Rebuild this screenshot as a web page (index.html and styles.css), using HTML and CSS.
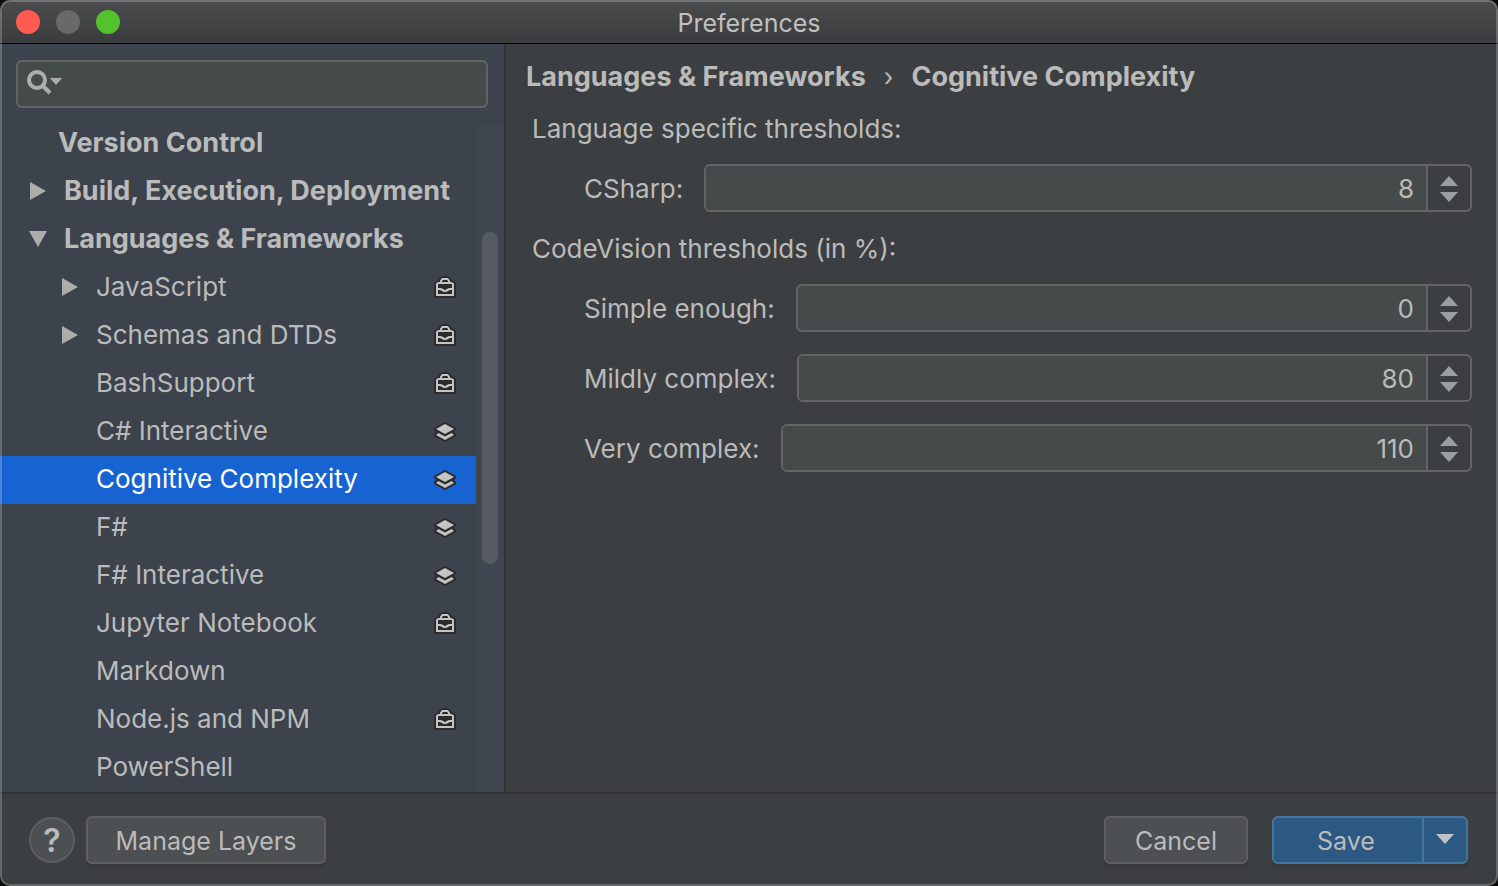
FILE: index.html
```html
<!DOCTYPE html>
<html lang="en">
<head>
<meta charset="utf-8">
<title>Preferences</title>
<link rel="stylesheet" href="styles.css">
</head>
<body>
<svg class="sprite" width="0" height="0" aria-hidden="true">
  <symbol id="bag" viewBox="0 0 22 22">
    <path fill="#2b2b2b" d="M0 22V7L4 4L6 2L8 0H14L16 2L18 4L22 7V22Z"/>
    <path fill="none" stroke="#c4c4c4" stroke-width="2" d="M7 6V5L8.500 3H13.500L15 5V6M3 13V8L4.500 7H17.500L19 8V13"/>
    <path fill="none" stroke="#c4c4c4" stroke-width="2" d="M3 14V19H19V14"/>
    <path fill="#c4c4c4" d="M2 12H7L9 13H10V14H12V13H13L15 12H20V14H16L14 15L12 16H10L8 15L6 14H2Z"/>
  </symbol>
  <symbol id="layers" viewBox="0 0 22 22">
    <path fill="#2b2b2b" d="M11 2L22 8V10L20 12L22 14V16L11 22L0 16V14L2 12L0 10V8Z"/>
    <path fill="#c4c4c4" d="M11 4L20 9L11 14L2 9Z"/>
    <path fill="#c4c4c4" d="M4.500 13L11 16.500L17.500 13L20 15L11 20L2 15Z"/>
  </symbol>
  <symbol id="right" viewBox="0 0 16 18"><path fill="#adadad" d="M0 0L16 9L0 18Z"/></symbol>
  <symbol id="down" viewBox="0 0 18 16"><path fill="#adadad" d="M0 0H18L9 16Z"/></symbol>
  <symbol id="spin-up" viewBox="0 0 18 10"><path fill="#9c9fa1" d="M9 0L18 10H0Z"/></symbol>
  <symbol id="spin-down" viewBox="0 0 18 10"><path fill="#9c9fa1" d="M0 0H18L9 10Z"/></symbol>
</svg>
<div class="window">
  <header class="titlebar">
    <div class="lights">
      <button class="light light-close" aria-label="Close"></button>
      <button class="light light-min" aria-label="Minimize" disabled></button>
      <button class="light light-zoom" aria-label="Zoom"></button>
    </div>
    <h1 class="title">Preferences</h1>
  </header>

  <div class="content">
    <aside class="sidebar">
      <div class="search">
        <svg class="search-icon" width="36" height="28" viewBox="0 0 36 28" aria-hidden="true">
          <circle cx="11" cy="10" r="8" fill="none" stroke="#adadad" stroke-width="4"/>
          <path d="M16 15L24 23" stroke="#adadad" stroke-width="4"/>
          <path d="M24 8H36L30 15Z" fill="#adadad"/>
        </svg>
        <input class="search-input" type="text" aria-label="Search settings">
      </div>
      <div class="tree-area">
        <ul class="tree">
          <li class="row group leaf"><span class="name">Version Control</span></li>
          <li class="row group"><span class="toggle"><svg width="16" height="18"><use href="#right"/></svg></span><span class="name">Build, Execution, Deployment</span></li>
          <li class="row group"><span class="toggle"><svg width="18" height="16"><use href="#down"/></svg></span><span class="name">Languages &amp; Frameworks</span></li>
          <li class="row child"><span class="toggle"><svg width="16" height="18"><use href="#right"/></svg></span><span class="name">JavaScript</span><svg class="scope" width="22" height="22"><use href="#bag"/></svg></li>
          <li class="row child"><span class="toggle"><svg width="16" height="18"><use href="#right"/></svg></span><span class="name">Schemas and DTDs</span><svg class="scope" width="22" height="22"><use href="#bag"/></svg></li>
          <li class="row child"><span class="toggle"></span><span class="name">BashSupport</span><svg class="scope" width="22" height="22"><use href="#bag"/></svg></li>
          <li class="row child"><span class="toggle"></span><span class="name">C# Interactive</span><svg class="scope" width="22" height="22"><use href="#layers"/></svg></li>
          <li class="row child selected"><span class="toggle"></span><span class="name">Cognitive Complexity</span><svg class="scope" width="22" height="22"><use href="#layers"/></svg></li>
          <li class="row child"><span class="toggle"></span><span class="name">F#</span><svg class="scope" width="22" height="22"><use href="#layers"/></svg></li>
          <li class="row child"><span class="toggle"></span><span class="name">F# Interactive</span><svg class="scope" width="22" height="22"><use href="#layers"/></svg></li>
          <li class="row child"><span class="toggle"></span><span class="name">Jupyter Notebook</span><svg class="scope" width="22" height="22"><use href="#bag"/></svg></li>
          <li class="row child"><span class="toggle"></span><span class="name">Markdown</span></li>
          <li class="row child"><span class="toggle"></span><span class="name">Node.js and NPM</span><svg class="scope" width="22" height="22"><use href="#bag"/></svg></li>
          <li class="row child"><span class="toggle"></span><span class="name">PowerShell</span></li>
        </ul>
        <div class="track"><div class="thumb"></div></div>
      </div>
    </aside>

    <main class="panel">
      <nav class="crumbs" aria-label="Breadcrumb">
        <span>Languages &amp; Frameworks</span>
        <span class="crumb-sep">›</span>
        <span>Cognitive Complexity</span>
      </nav>
      <form class="form">
        <h2 class="section">Language specific thresholds:</h2>
        <div class="fields">
          <div class="field">
            <label for="csharp">CSharp:</label>
            <div class="spinner">
              <input id="csharp" type="text" inputmode="numeric" value="8">
              <div class="steps">
                <button type="button" aria-label="Increase CSharp"><svg width="18" height="10"><use href="#spin-up"/></svg></button>
                <button type="button" aria-label="Decrease CSharp"><svg width="18" height="10"><use href="#spin-down"/></svg></button>
              </div>
            </div>
          </div>
        </div>
        <h2 class="section">CodeVision thresholds (in %):</h2>
        <div class="fields">
          <div class="field">
            <label for="simple">Simple enough:</label>
            <div class="spinner">
              <input id="simple" type="text" inputmode="numeric" value="0">
              <div class="steps">
                <button type="button" aria-label="Increase simple enough"><svg width="18" height="10"><use href="#spin-up"/></svg></button>
                <button type="button" aria-label="Decrease simple enough"><svg width="18" height="10"><use href="#spin-down"/></svg></button>
              </div>
            </div>
          </div>
          <div class="field">
            <label for="mild">Mildly complex:</label>
            <div class="spinner">
              <input id="mild" type="text" inputmode="numeric" value="80">
              <div class="steps">
                <button type="button" aria-label="Increase mildly complex"><svg width="18" height="10"><use href="#spin-up"/></svg></button>
                <button type="button" aria-label="Decrease mildly complex"><svg width="18" height="10"><use href="#spin-down"/></svg></button>
              </div>
            </div>
          </div>
          <div class="field">
            <label for="very">Very complex:</label>
            <div class="spinner">
              <input id="very" type="text" inputmode="numeric" value="110">
              <div class="steps">
                <button type="button" aria-label="Increase very complex"><svg width="18" height="10"><use href="#spin-up"/></svg></button>
                <button type="button" aria-label="Decrease very complex"><svg width="18" height="10"><use href="#spin-down"/></svg></button>
              </div>
            </div>
          </div>
        </div>
      </form>
    </main>
  </div>

  <footer class="footer">
    <button class="help" aria-label="Help">?</button>
    <button class="btn btn-wide">Manage Layers</button>
    <span class="spacer"></span>
    <button class="btn">Cancel</button>
    <div class="split">
      <button class="split-main">Save</button>
      <button class="split-menu" aria-label="More save options"><svg width="18" height="10" viewBox="0 0 18 10"><path fill="#bfc3c6" d="M0 0H18L9 10Z"/></svg></button>
    </div>
  </footer>
</div>
</body>
</html>
```
FILE: styles.css
```css
* { box-sizing: border-box; }

body {
  margin: 0;
  background: #0c0d0e;
  color: #bbbbbb;
  font-family: Inter, "Liberation Sans", sans-serif;
  font-size: 26px;
  line-height: 32px;
}

button, input { font: inherit; color: inherit; }
button { margin: 0; padding: 0; border: 0; background: none; }
svg { display: block; flex: none; }
.sprite { position: absolute; }

.window {
  position: relative;
  display: flex;
  flex-direction: column;
  min-height: 100vh;
  overflow: hidden;
  border-radius: 10px;
  background: #3c3f41;
}

/* translucent rim over the whole window */
.window::after {
  content: "";
  position: absolute;
  inset: 0;
  border: 2px solid rgba(255, 255, 255, 0.22);
  border-radius: 10px;
  pointer-events: none;
}

.titlebar {
  display: grid;
  grid-template-columns: 1fr auto 1fr;
  align-items: center;
  height: 44px;
  padding: 0 16px;
  border-bottom: 1px solid #000000;
  background: linear-gradient(#4b4c4e, #3b3c3e);
}
.lights { display: flex; gap: 16px; }
.light { width: 24px; height: 24px; border-radius: 50%; }
.light-close { background: #ff5b51; }
.light-min { background: #68696b; }
.light-zoom { background: #54c22d; }
.title { margin: 0; padding-top: 2px; font-size: 25px; font-weight: 400; color: #c0c0c0; }

.content { display: flex; flex: 1; }

.sidebar {
  display: flex;
  flex-direction: column;
  flex: 0 0 506px;
  min-width: 0;
  border-right: 2px solid #333435;
  background: #3d434c;
}
.search {
  display: flex;
  align-items: center;
  gap: 8px;
  height: 48px;
  margin: 16px 16px 12px;
  padding: 0 8px;
  border: 2px solid #646464;
  border-radius: 6px;
  background: #454b4a;
}
.search-input {
  flex: 1;
  width: 100%;
  min-width: 0;
  border: 0;
  outline: 0;
  background: transparent;
}

.tree-area { display: flex; flex: 1; }
.tree { flex: 1; min-width: 0; margin: 0; padding: 0; list-style: none; }
.row {
  display: flex;
  align-items: center;
  height: 48px;
  padding-right: 20px;
  padding-bottom: 2px;
  white-space: nowrap;
}
.group { padding-left: 28px; font-size: 27px; font-weight: 700; }
.leaf { padding-left: 58px; }
.child { padding-left: 60px; }
.toggle { display: flex; justify-content: center; flex: none; width: 20px; margin-right: 16px; }
.name { flex: 1; }
.selected { background: #1863d2; color: #ffffff; }
.track { flex: 0 0 28px; margin-top: 4px; padding: 108px 6px 0; background: #40464f; }
.thumb { height: 332px; border-radius: 8px; background: #565a61; }

.panel { flex: 1; min-width: 0; padding: 16px 26px 0 20px; }
.crumbs { display: flex; gap: 18px; font-size: 27px; font-weight: 700; line-height: 34px; }
.crumb-sep { font-size: 25px; font-weight: 400; }
.form { padding-left: 6px; }
.section { margin: 0; padding-top: 18px; font-size: 26px; font-weight: 400; line-height: 34px; }
.fields { display: flex; flex-direction: column; gap: 22px; padding: 18px 0 2px 52px; }
.field { display: flex; align-items: center; gap: 21px; }
.field label { padding-top: 2px; }
.spinner {
  display: flex;
  flex: 1;
  min-width: 0;
  height: 48px;
  overflow: hidden;
  border: 2px solid #646464;
  border-radius: 6px;
}
.spinner input {
  flex: 1;
  min-width: 0;
  padding: 2px 12px 0;
  border: 0;
  outline: 0;
  background: #454b4a;
  text-align: right;
}
.steps {
  display: flex;
  flex-direction: column;
  justify-content: center;
  gap: 6px;
  width: 44px;
  padding-top: 2px;
  border-left: 2px solid #646464;
}
.steps button { display: flex; justify-content: center; }

.footer {
  display: flex;
  align-items: center;
  height: 94px;
  padding: 0 30px 0 29px;
  border-top: 2px solid #323232;
  font-size: 25px;
}
.help {
  width: 46px;
  height: 46px;
  margin-right: 11px;
  padding-top: 2px;
  border: 2px solid #5e6060;
  border-radius: 50%;
  background: #4c5052;
  font-size: 32px;
  font-weight: 600;
}
.btn {
  min-width: 144px;
  height: 48px;
  padding: 2px 26px 0;
  border: 2px solid #5e6060;
  border-radius: 6px;
  background: #4c5052;
  box-shadow: 0 4px 0 #37393b;
}
.btn-wide { min-width: 240px; }
.spacer { flex: 1; }
.split {
  display: flex;
  height: 48px;
  margin-left: 24px;
  border: 2px solid #42769a;
  border-radius: 6px;
  background: #2c5982;
  box-shadow: 0 4px 0 #37393b;
}
.split-main { min-width: 148px; padding: 2px 26px 0 22px; }
.split-menu {
  display: flex;
  align-items: center;
  justify-content: center;
  width: 44px;
  padding-bottom: 2px;
  border-left: 2px solid #42769a;
}
```
